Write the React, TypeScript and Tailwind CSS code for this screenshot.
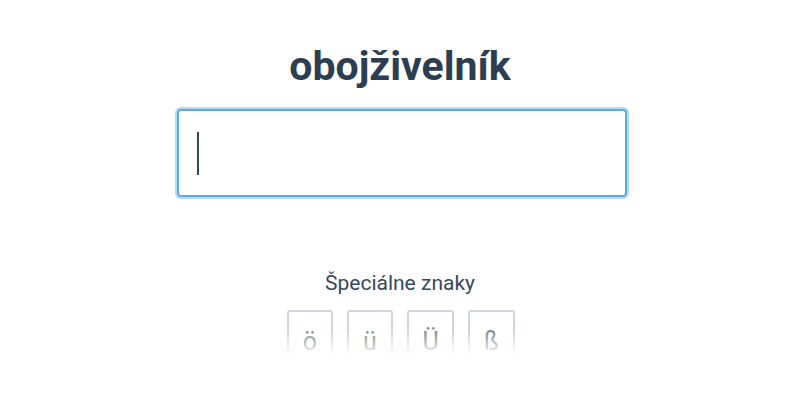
const SPECIAL_CHARS = [
  { c: 'ö', w: 'w-[46px]' },
  { c: 'ü', w: 'w-[46px]' },
  { c: 'Ü', w: 'w-[47px]' },
  { c: 'ß', w: 'w-[47px]' },
];

export default function App() {
  return (
    <div className="w-[800px] h-[400px] bg-white flex flex-col items-center font-['Roboto',sans-serif]">
      {/* ── Word ── */}
      <h1 className="mt-[42px] h-[48px] leading-[48px] text-[41px] font-bold text-[#2c3e50]">
        obojživelník
      </h1>

      {/* ── Answer input ── */}
      <div className="mt-[17px] ml-[3px] w-[454px] h-[92px] rounded-[6px] p-[2px] bg-[#b6dbf4]">
        <div className="w-full h-full rounded-[4px] border-2 border-[#5dade2] bg-white flex items-center pl-[18px]">
          <div className="w-[2px] h-[43px] bg-[#34495e]" />
        </div>
      </div>

      {/* ── Special chars ── */}
      <div className="mt-[71px] text-[21px] leading-[26px] text-[#34495e]">Špeciálne znaky</div>

      <div className="relative mt-[14px] ml-[2px] h-[46px] overflow-hidden flex gap-[14px]">
        {SPECIAL_CHARS.map(({ c, w }) => (
          <button
            key={c}
            className={`${w} h-[60px] rounded-[3px] border-2 border-[#d0d6dc] bg-white text-[25px] text-[#7f8c8d] flex justify-center pt-[16px] leading-[28px]`}
          >
            {c}
          </button>
        ))}
        <div className="absolute inset-0 bg-gradient-to-b from-transparent from-45% to-white pointer-events-none" />
      </div>
    </div>
  );
}
